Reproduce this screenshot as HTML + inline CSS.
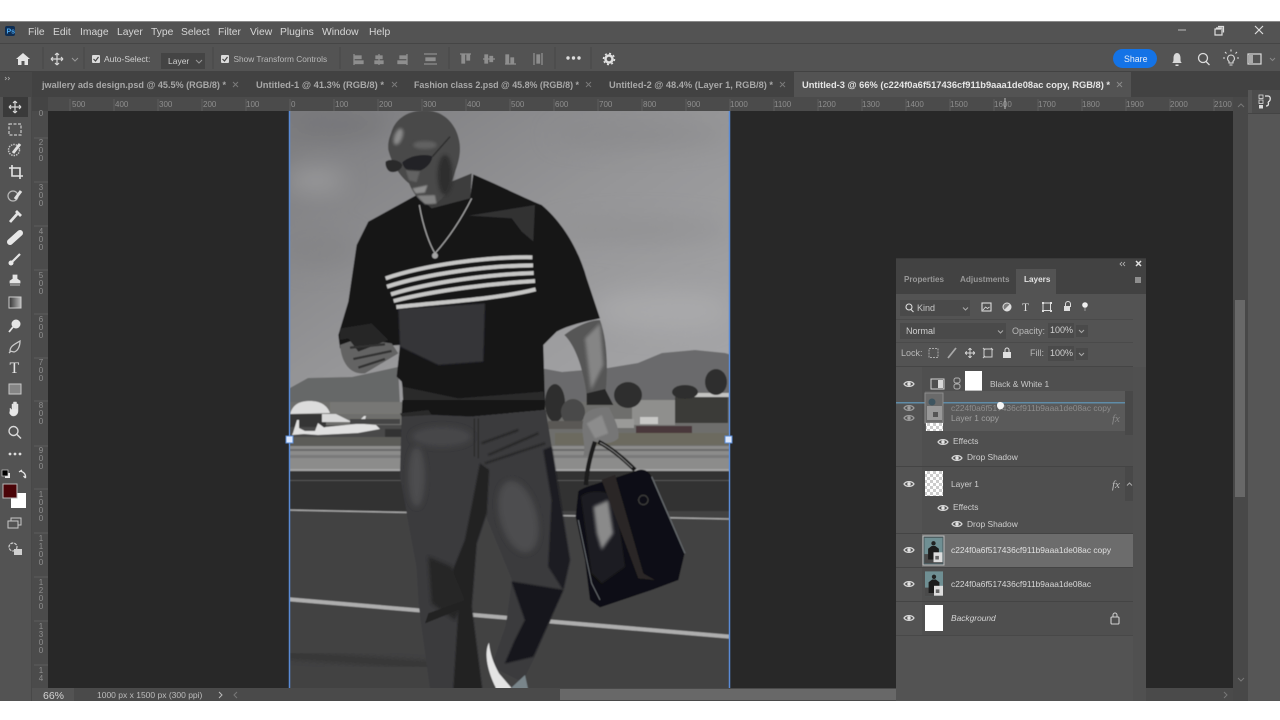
<!DOCTYPE html>
<html><head><meta charset="utf-8"><title>Photoshop</title>
<style>
html,body{margin:0;padding:0;width:1280px;height:720px;overflow:hidden;background:#fff}
body>svg{display:block;filter:blur(.35px)}
text{font-family:"Liberation Sans",sans-serif}
.m{font-size:10.300px;fill:#d6d6d6}
.o{font-size:8.500px;fill:#d0d0d0}
.t{font-size:9.200px;font-weight:700;fill:#a8a8a8}
.r{font-size:8px;fill:#8e8e8e}
.l{font-size:8.400px;fill:#cfcfcf}
</style></head><body>
<svg width="1280" height="720" viewBox="0 0 1280 720" xmlns="http://www.w3.org/2000/svg">
<defs>
<clipPath id="photo"><rect x="289" y="111" width="441" height="577"/></clipPath>
<linearGradient id="sky" x1="0" y1="0" x2="1" y2="1"><stop offset="0" stop-color="#7b7b7e"/><stop offset=".5" stop-color="#969698"/><stop offset="1" stop-color="#a8a8aa"/></linearGradient>
<linearGradient id="grad" x1="0" y1="0" x2="1" y2="0"><stop offset="0" stop-color="#333"/><stop offset="1" stop-color="#bbb"/></linearGradient>
<pattern id="chk" width="6" height="6" patternUnits="userSpaceOnUse"><rect width="6" height="6" fill="#fff"/><rect width="3" height="3" fill="#ccc"/><rect x="3" y="3" width="3" height="3" fill="#ccc"/></pattern>
<filter id="b0" x="-5%" y="-5%" width="110%" height="110%"><feGaussianBlur stdDeviation=".6"/></filter>
<filter id="b1" x="-20%" y="-20%" width="140%" height="140%"><feGaussianBlur stdDeviation="2"/></filter>
<filter id="b2" x="-30%" y="-30%" width="160%" height="160%"><feGaussianBlur stdDeviation="5"/></filter>
<filter id="b3" x="-40%" y="-40%" width="180%" height="180%"><feGaussianBlur stdDeviation="9"/></filter>
<filter id="b8" x="-40%" y="-40%" width="180%" height="180%"><feGaussianBlur stdDeviation="12"/></filter>
<g id="eye"><path d="M-5 0C-3-3.200 3-3.200 5 0 3 3.200-3 3.200-5 0Z" fill="none" stroke="#d8d8d8" stroke-width="1.200"/><circle r="1.700" fill="#e4e4e4"/></g>
<g id="move"><path d="M-6 0H6M0-6V6M-6 0l2-2M-6 0l2 2M6 0l-2-2M6 0l-2 2M0-6l-2 2M0-6l2 2M0 6l-2-2M0 6l2-2" stroke="#d8d8d8" stroke-width="1.200" fill="none"/></g>
<g id="man"><rect x="-5" y="-7" width="10" height="14" fill="#6f8f93"/><rect x="-5" y="2" width="10" height="5" fill="#4a4a4a"/><circle cy="-4" r="1.200" fill="#222"/><path d="M-3 5V-1L-1-2.500H1L3-1V5Z" fill="#1c1c1c"/><rect x="0" y="1" width="5" height="5.500" fill="#ddd"/><rect x="1" y="3" width="2" height="2" fill="#666"/></g>
</defs>

<rect width="1280" height="720" fill="#fff"/>
<rect y="21" width="1280" height="680" fill="#535353"/>
<rect y="21" width="1280" height="1" fill="#8a8a8a"/>
<rect y="43" width="1280" height="1" fill="#454545"/>
<rect y="71" width="1280" height="26" fill="#424242"/>

<!-- title bar -->
<rect x="5" y="26" width="10" height="10" rx="2" fill="#0f2d52"/>
<text x="6.500" y="33.500" style="font-size:7px;font-weight:700;fill:#4aa8f0">Ps</text>
<text class="m" x="28" y="35">File</text>
<text class="m" x="53" y="35">Edit</text>
<text class="m" x="80" y="35">Image</text>
<text class="m" x="117" y="35">Layer</text>
<text class="m" x="151" y="35">Type</text>
<text class="m" x="181" y="35">Select</text>
<text class="m" x="218" y="35">Filter</text>
<text class="m" x="250" y="35">View</text>
<text class="m" x="280" y="35">Plugins</text>
<text class="m" x="322" y="35">Window</text>
<text class="m" x="369" y="35">Help</text>
<path d="M1178 30h8" stroke="#aaa" stroke-width="1.200"/>
<path d="M1216 28h6v7h-7v-6h6M1218 26.500h5.500v6" stroke="#ddd" stroke-width="1.200" fill="none"/>
<path d="M1255 26l8 8M1263 26l-8 8" stroke="#ddd" stroke-width="1.200"/>

<!-- options bar -->
<path d="M16 59l7-6 7 6h-2v6h-3.500v-4h-3v4H18v-6z" fill="#e4e4e4"/>
<path d="M43 47v22M84 47v22M213 47v22M340 47v22M449 47v22M555 47v22M591 47v22" stroke="#474747"/>
<use href="#move" x="57" y="59"/>
<path d="M72 58l3 3 3-3" stroke="#999" fill="none"/>
<rect x="92" y="55" width="8" height="8" rx="1" fill="#dcdcdc"/><path d="M93.500 59l2 2 3-4" stroke="#444" stroke-width="1.200" fill="none"/>
<text class="o" x="104" y="62">Auto-Select:</text>
<rect x="161" y="53" width="44" height="16" fill="#444"/>
<text class="o" x="168" y="64">Layer</text><path d="M196 60l3 3 3-3" stroke="#999" fill="none"/>
<rect x="221" y="55" width="8" height="8" rx="1" fill="#dcdcdc"/><path d="M222.500 59l2 2 3-4" stroke="#444" stroke-width="1.200" fill="none"/>
<text class="o" x="233.500" y="62" style="font-size:8.300px;fill:#b8b8b8">Show Transform Controls</text>
<g stroke="#8e8e8e" stroke-width="1.300" fill="#8e8e8e">
<path d="M354 54v11" fill="none"/><rect x="355" y="56" width="6" height="2.500"/><rect x="355" y="61" width="8" height="2.500"/>
<path d="M379 54v11" fill="none"/><rect x="376" y="56" width="6" height="2.500"/><rect x="375" y="61" width="8" height="2.500"/>
<path d="M407 54v11" fill="none"/><rect x="400" y="56" width="6" height="2.500"/><rect x="398" y="61" width="8" height="2.500"/>
<path d="M424 54h13M424 64h13" fill="none"/><rect x="426" y="58" width="9" height="2.500"/>
<path d="M460 54h11" fill="none"/><rect x="462" y="55" width="2.500" height="8"/><rect x="467" y="55" width="2.500" height="5"/>
<path d="M483 59h12" fill="none"/><rect x="485" y="55" width="2.500" height="8"/><rect x="490" y="56.500" width="2.500" height="5"/>
<path d="M505 64h11" fill="none"/><rect x="506" y="55" width="2.500" height="8"/><rect x="511" y="58" width="2.500" height="5"/>
<path d="M534 53v12M542 53v12" fill="none"/><rect x="537" y="55" width="2.500" height="8"/>
</g>
<circle cx="568" cy="58" r="1.700" fill="#ddd"/><circle cx="573.500" cy="58" r="1.700" fill="#ddd"/><circle cx="579" cy="58" r="1.700" fill="#ddd"/>
<circle cx="609" cy="59" r="3.500" fill="none" stroke="#e0e0e0" stroke-width="2.500"/><circle cx="609" cy="59" r="5.500" fill="none" stroke="#e0e0e0" stroke-width="1.500" stroke-dasharray="2 2.300"/>
<rect x="1113" y="49" width="44" height="19" rx="9.500" fill="#1473e6"/>
<text x="1124" y="62" style="font-size:8.800px;fill:#e8eef8">Share</text>
<path d="M1172 63c1.500-1 1.500-2 1.500-5 0-3 1.500-5 3.500-5s3.500 2 3.500 5c0 3 0 4 1.500 5ZM1175.500 64.500h3v1.500h-3z" fill="#d8d8d8"/>
<circle cx="1203" cy="58" r="4.500" fill="none" stroke="#dcdcdc" stroke-width="1.300"/><path d="M1206 61.500l3.500 3.500" stroke="#dcdcdc" stroke-width="1.300"/>
<path d="M1231 55a3.500 3.500 0 0 0-2 6.300V63h4v-1.700a3.500 3.500 0 0 0-2-6.300ZM1229.500 65h3M1231 49.500v2M1225 52l1.500 1.500M1237 52l-1.500 1.500M1223 58h2M1237 58h2" stroke="#dcdcdc" fill="none" stroke-width="1.100"/>
<rect x="1248" y="54" width="13" height="10" fill="none" stroke="#dcdcdc" stroke-width="1.200"/><rect x="1249" y="55" width="4" height="8" fill="#aaa"/>
<path d="M1270 58l2.500 2.500 2.500-2.500" stroke="#888" fill="none"/>

<!-- tabs -->
<rect y="72" width="32" height="25" fill="#474747"/>
<path d="M5 77l1.500 1.500-1.500 1.500M8 77l1.500 1.500-1.500 1.500" stroke="#aaa" fill="none" stroke-width=".8"/>
<text class="t" x="42" y="88" textLength="184" lengthAdjust="spacingAndGlyphs">jwallery ads design.psd @ 45.5% (RGB/8) *</text>
<path d="M233 82l5 5M238 82l-5 5" stroke="#7a7a7a"/>
<text class="t" x="256" y="88" textLength="128" lengthAdjust="spacingAndGlyphs">Untitled-1 @ 41.3% (RGB/8) *</text>
<path d="M392 82l5 5M397 82l-5 5" stroke="#7a7a7a"/>
<text class="t" x="414" y="88" textLength="165" lengthAdjust="spacingAndGlyphs">Fashion class 2.psd @ 45.8% (RGB/8) *</text>
<path d="M586 82l5 5M591 82l-5 5" stroke="#7a7a7a"/>
<text class="t" x="609" y="88" textLength="164" lengthAdjust="spacingAndGlyphs">Untitled-2 @ 48.4% (Layer 1, RGB/8) *</text>
<path d="M780 82l5 5M785 82l-5 5" stroke="#7a7a7a"/>
<rect x="794" y="72" width="337" height="25" fill="#535353"/>
<text class="t" x="802" y="88" textLength="308" lengthAdjust="spacingAndGlyphs" style="fill:#e6e6e6">Untitled-3 @ 66% (c224f0a6f517436cf911b9aaa1de08ac copy, RGB/8) *</text>
<path d="M1117 82l5 5M1122 82l-5 5" stroke="#8a8a8a"/>
<path d="M1277 77l-1.500 1.500 1.500 1.500M1274 77l-1.500 1.500 1.500 1.500" stroke="#aaa" fill="none" stroke-width=".8"/>

<!-- ruler -->
<rect x="32" y="97" width="1201" height="14" fill="#4b4b4b"/>
<rect x="32" y="97" width="16" height="591" fill="#4b4b4b"/>
<rect x="32" y="97" width="16" height="14" fill="#444"/>
<g stroke="#5e5e5e">
<path d="M70 99v12M114 99v12M158 99v12M202 99v12M246 99v12M290 99v12M334 99v12M378 99v12M422 99v12M466 99v12M510 99v12M554 99v12M598 99v12M642 99v12M686 99v12M730 99v12M774 99v12M818 99v12M862 99v12M906 99v12M950 99v12M994 99v12M1038 99v12M1082 99v12M1126 99v12M1170 99v12M1214 99v12"/>
<path d="M34 138h14M34 182h14M34 226h14M34 270h14M34 314h14M34 358h14M34 401h14M34 446h14M34 489h14M34 533h14M34 577h14M34 621h14M34 665h14"/>
</g>
<text class="r" x="72" y="107">500</text><text class="r" x="115" y="107">400</text><text class="r" x="159" y="107">300</text><text class="r" x="203" y="107">200</text><text class="r" x="246" y="107">100</text><text class="r" x="291" y="107">0</text><text class="r" x="335" y="107">100</text><text class="r" x="379" y="107">200</text><text class="r" x="423" y="107">300</text><text class="r" x="467" y="107">400</text><text class="r" x="511" y="107">500</text><text class="r" x="555" y="107">600</text><text class="r" x="599" y="107">700</text><text class="r" x="643" y="107">800</text><text class="r" x="687" y="107">900</text><text class="r" x="730" y="107">1000</text><text class="r" x="774" y="107">1100</text><text class="r" x="818" y="107">1200</text><text class="r" x="862" y="107">1300</text><text class="r" x="906" y="107">1400</text><text class="r" x="950" y="107">1500</text><text class="r" x="994" y="107">1600</text><text class="r" x="1038" y="107">1700</text><text class="r" x="1082" y="107">1800</text><text class="r" x="1126" y="107">1900</text><text class="r" x="1170" y="107">2000</text><text class="r" x="1214" y="107">2100</text>
<path d="M1005 98v11" stroke="#bbb"/>
<g text-anchor="middle">
<text class="r" x="41" y="116">0</text>
<text class="r" x="41" y="145">2</text><text class="r" x="41" y="153">0</text><text class="r" x="41" y="161">0</text>
<text class="r" x="41" y="190">3</text><text class="r" x="41" y="198">0</text><text class="r" x="41" y="206">0</text>
<text class="r" x="41" y="234">4</text><text class="r" x="41" y="242">0</text><text class="r" x="41" y="250">0</text>
<text class="r" x="41" y="278">5</text><text class="r" x="41" y="286">0</text><text class="r" x="41" y="294">0</text>
<text class="r" x="41" y="322">6</text><text class="r" x="41" y="330">0</text><text class="r" x="41" y="338">0</text>
<text class="r" x="41" y="365">7</text><text class="r" x="41" y="373">0</text><text class="r" x="41" y="381">0</text>
<text class="r" x="41" y="408">8</text><text class="r" x="41" y="416">0</text><text class="r" x="41" y="424">0</text>
<text class="r" x="41" y="453">9</text><text class="r" x="41" y="461">0</text><text class="r" x="41" y="469">0</text>
<text class="r" x="41" y="497">1</text><text class="r" x="41" y="505">0</text><text class="r" x="41" y="513">0</text><text class="r" x="41" y="521">0</text>
<text class="r" x="41" y="541">1</text><text class="r" x="41" y="549">1</text><text class="r" x="41" y="557">0</text><text class="r" x="41" y="565">0</text>
<text class="r" x="41" y="585">1</text><text class="r" x="41" y="593">2</text><text class="r" x="41" y="601">0</text><text class="r" x="41" y="609">0</text>
<text class="r" x="41" y="629">1</text><text class="r" x="41" y="637">3</text><text class="r" x="41" y="645">0</text><text class="r" x="41" y="653">0</text>
<text class="r" x="41" y="673">1</text><text class="r" x="41" y="681">4</text>
</g>

<!-- canvas -->
<rect x="48" y="111" width="1185" height="577" fill="#282828"/>

<!-- PHOTO -->
<g clip-path="url(#photo)"><g filter="url(#b0)">
<rect x="285" y="105" width="450" height="300" fill="url(#sky)"/>
<g filter="url(#b8)" opacity=".5">
<ellipse cx="315" cy="180" rx="30" ry="12" fill="#b0b0b0"/>
<ellipse cx="340" cy="125" rx="50" ry="12" fill="#6b6b6d"/>
<ellipse cx="640" cy="135" rx="90" ry="12" fill="#858587"/>
<ellipse cx="640" cy="230" rx="90" ry="12" fill="#8a8a8c"/>
<ellipse cx="320" cy="250" rx="40" ry="18" fill="#808082"/>
<ellipse cx="660" cy="310" rx="70" ry="20" fill="#b2b2b4"/>
</g>
<path d="M285 392L290 388 308 378 352 377 398 367 400 405H285Z" fill="#666768"/>
<path d="M540 405V368L562 372 608 368 638 363 662 353 695 350 725 353 735 356V405Z" fill="#6a6b6c"/>
<path d="M285 402H735V446H285Z" fill="#6e6e6c"/>
<rect x="330" y="402" width="75" height="12" fill="#777775"/>
<rect x="285" y="425" width="120" height="12" fill="#4a4a48"/>
<rect x="285" y="437" width="120" height="9" fill="#5c5c58"/>
<!-- hangar & planes -->
<path d="M290 414c3-10 10-13 20-13s17 4 20 12Z" fill="#dcdcdc"/>
<rect x="290" y="414" width="36" height="13" fill="#353535"/>
<path d="M322 414h14l16 8H322Z" fill="#d8d8d8"/>
<path d="M293 433l4-13 2 0 0 8 6 3 10 0 3-8 8 6-8 0 8-2 30-3 8-8 2 0-2 8 12 1 4 4-22 4-40 2-14-1-12 1Z" fill="#e0e0e0"/>
<rect x="350" y="419" width="50" height="5" fill="#454545"/>
<rect x="385" y="429" width="20" height="8" fill="#333"/>
<!-- right buildings -->
<rect x="632" y="400" width="43" height="25" fill="#8f8f8d"/>
<rect x="675" y="397" width="53" height="26" fill="#3a3a38"/>
<rect x="690" y="393" width="40" height="4" fill="#c4c4c2"/>
<g fill="#2f2f2f">
<ellipse cx="628" cy="395" rx="14" ry="13"/><ellipse cx="685" cy="392" rx="13" ry="7"/><ellipse cx="716" cy="382" rx="11" ry="13"/>
<ellipse cx="555" cy="403" rx="10" ry="19"/>
<ellipse cx="573" cy="412" rx="12" ry="13" fill="#4a4a48"/>
</g>
<rect x="612" y="419" width="22" height="9" fill="#9a9a98"/>
<rect x="640" y="417" width="18" height="7" fill="#c8c8c6"/>
<rect x="548" y="421" width="45" height="8" fill="#5a5854"/>
<rect x="636" y="426" width="56" height="7" fill="#48383a"/>
<rect x="555" y="433" width="175" height="12" fill="#6c6a5e"/>
<!-- runway -->
<rect x="285" y="446" width="450" height="25" fill="#8c8c8b"/>
<rect x="285" y="449" width="450" height="2" fill="#6a6a6a"/>
<rect x="285" y="455" width="450" height="3" fill="#7a7a7a"/>
<rect x="285" y="469" width="450" height="2" fill="#a4a4a4"/>
<rect x="285" y="471" width="450" height="40" fill="#303030"/>
<rect x="285" y="480" width="450" height="1" fill="#555"/>
<path d="M285 511H735V692H285Z" fill="#424243"/>
<path d="M285 510L730 519" stroke="#a6a6a6" stroke-width="1.500"/>
<path d="M285 599L733 637" stroke="#aeaeae" stroke-width="4"/>
<path d="M285 655L430 665" stroke="#383838" stroke-width="10" filter="url(#b1)"/>

<!-- body upper (x=285+zx/3, y=105+zy/3) -->
<g transform="translate(285 105) scale(.33333)">
<path d="M400 270L560 205 556 285 510 310 440 320Z" fill="#3c3c3c"/>
<path d="M565 208C640 240 720 280 770 300 830 350 880 430 905 520L945 640C900 650 850 660 815 680L775 720 780 900H360L350 830 335 815 345 720 165 730 160 690 190 590 215 420 250 350 395 270 440 310 555 280Z" fill="#161618"/>
<path d="M550 332L750 300 745 410 710 380 680 340Z" fill="#303031" filter="url(#b0)"/>
<path d="M340 612L600 595 595 770 460 780 345 725Z" fill="#363637" filter="url(#b1)"/>
<path d="M352 845L520 880 775 860 780 900H355Z" fill="#2c2c2c"/>
<g fill="none" stroke="#c6c6c5" stroke-width="12">
<path d="M302 520C420 480 600 455 742 457"/>
<path d="M306 545C430 505 610 482 744 481"/>
<path d="M318 568C440 530 620 508 746 504"/>
<path d="M326 588C450 555 630 535 750 528"/>
<path d="M334 606C460 592 640 582 752 553"/>
</g>
<!-- head -->
<path d="M318 85C330 40 370 16 420 16 475 16 512 55 522 105 528 130 525 160 512 195 500 240 480 285 445 298 415 302 390 278 372 235 345 215 320 175 310 135 308 115 312 100 318 85Z" fill="#484848"/>
<ellipse cx="340" cy="95" rx="12" ry="26" transform="rotate(20 340 95)" fill="#8c8c8c" filter="url(#b2)"/>
<ellipse cx="420" cy="120" rx="36" ry="12" fill="#626262" filter="url(#b2)"/>
<ellipse cx="480" cy="210" rx="22" ry="60" fill="#2e2e2e" filter="url(#b2)"/>
<path d="M302 170C315 160 345 165 352 180 350 195 330 205 315 200 305 195 300 180 302 170Z" fill="#2a2a2c"/>
<path d="M352 172C375 150 425 145 442 155 440 175 420 195 395 200 370 203 355 190 352 172Z" fill="#242426"/>
<path d="M442 155L495 95" stroke="#2a2a2a" stroke-width="4"/>
<path d="M362 195L405 198 395 232 372 226Z" fill="#626262" filter="url(#b1)"/>
<path d="M382 250L428 240 420 263 392 266Z" fill="#8e8e8e" filter="url(#b1)"/>
<path d="M395 272L450 270 455 296 420 298Z" fill="#828282" filter="url(#b1)"/>
<!-- chain -->
<path d="M403 300C415 370 435 420 450 445 490 400 530 340 560 280" fill="none" stroke="#a9a9a9" stroke-width="3.500"/>
<circle cx="450" cy="452" r="9" fill="#a5a5a5"/>
<!-- phone hand -->
<path d="M165 720C170 780 200 810 240 805L340 745 320 715 220 700Z" fill="#646464"/>
<path d="M165 670L260 655 310 705 220 740 190 700 165 705Z" fill="#262626"/>
<path d="M195 728L300 718M205 762L320 738M220 788L300 762" stroke="#303030" stroke-width="7"/>
<!-- forearm -->
<path d="M838 690C870 665 915 645 945 645 965 700 970 780 962 860L905 870C895 790 870 720 838 690Z" fill="#565656" filter="url(#b0)"/>
<path d="M900 700L945 655 955 780 918 855Z" fill="#858585" filter="url(#b2)"/>
<path d="M905 865L960 852 985 900H905Z" fill="#262626"/>
</g>

<!-- lower (y=400+zy/3) -->
<g transform="translate(285 400) scale(.33333)">
<path d="M352 0L780 0 780 30 560 50 350 45Z" fill="#131315"/>
<path d="M350 40L560 50 782 30 800 140 855 480 835 570 750 770 712 845 620 800 662 680 682 540 600 340 575 420 560 620 592 870H436L402 620 395 500 345 230Z" fill="#3a3a3c"/>
<path d="M345 40L430 30 440 45 350 50Z" fill="#2b2b2b"/>
<path d="M585 190L612 210 605 340 575 430 560 620 592 870H505L520 640 500 520 540 420 560 320Z" fill="#202022" filter="url(#b1)"/>
<path d="M430 470L500 500 540 600 510 660 440 610Z" fill="#252527" filter="url(#b2)"/>
<path d="M775 150L800 140 855 480 835 570 790 500 800 300Z" fill="#1f1f21" filter="url(#b1)"/>
<path d="M680 545L835 570 745 770 660 790 690 720 720 660Z" fill="#17171b" filter="url(#b1)"/>
<ellipse cx="395" cy="230" rx="24" ry="90" fill="#4e4e50" filter="url(#b3)"/>
<ellipse cx="700" cy="350" rx="55" ry="110" transform="rotate(-15 700 350)" fill="#4e4e50" filter="url(#b3)"/>
<ellipse cx="470" cy="110" rx="90" ry="30" fill="#464648" filter="url(#b3)"/>
<path d="M430 640L540 600 545 620 420 670Z" fill="#242424" filter="url(#b0)"/>
<path d="M568 55V170M580 55V175" stroke="#2b2b2b" stroke-width="4"/>
<path d="M600 190L780 130M610 165L760 100M590 130L700 90" stroke="#272727" stroke-width="6" filter="url(#b1)"/>
<!-- shoe -->
<path d="M612 728C595 760 610 820 632 862V870H678V862L642 820C625 790 615 760 612 728Z" fill="#e4e4e4"/>
<path d="M680 870V862L720 825 730 870Z" fill="#79858a"/>
<!-- hand -->
<path d="M895 60C895 35 925 20 972 22 985 50 1005 85 1000 115 980 135 950 130 930 125L918 165 895 170C905 130 885 100 895 60Z" fill="#767676"/>
<path d="M905 70L950 45 970 100 930 115Z" fill="#8c8c8c" filter="url(#b1)"/>
<!-- bag -->
<path d="M940 125C980 145 1020 180 1050 210" fill="none" stroke="#191919" stroke-width="13"/>
<path d="M945 128C985 148 1020 183 1042 203" fill="none" stroke="#808080" stroke-width="3"/>
<path d="M930 125C915 170 905 210 903 255" fill="none" stroke="#1d1d1f" stroke-width="13"/>
<path d="M880 275C890 260 950 250 1060 210 1085 205 1095 220 1105 240L1200 455 1180 540 1100 570 945 622 915 600 900 480 872 350Z" fill="#101012"/>
<path d="M888 290C910 270 960 270 990 290L1020 500 950 550 920 520Z" fill="#1f1f21" filter="url(#b1)"/>
<path d="M925 320L970 300 985 400 950 450 935 400Z" fill="#8a8a8a" filter="url(#b2)"/>
<path d="M950 240L990 225 1075 520 1110 540 1060 535Z" fill="#2a2525"/>
<path d="M1100 230L1200 460" stroke="#666a6e" stroke-width="4" fill="none"/>
<path d="M880 360L920 550 945 600" stroke="#70757a" stroke-width="2.500" fill="none"/>
<circle cx="1075" cy="300" r="14" fill="none" stroke="#3a3a3a" stroke-width="4"/>
</g>
</g></g>
<!-- transform frame -->
<path d="M289.500 111V688M729.500 111V688" stroke="#5a8bd6" stroke-width="1.500"/>
<rect x="286" y="436" width="7" height="7" fill="#dbe8ff" stroke="#5a8bd6"/>
<rect x="725" y="436" width="7" height="7" fill="#dbe8ff" stroke="#5a8bd6"/>

<!-- toolbar -->
<rect y="97" width="32" height="604" fill="#535353"/>
<rect x="31" y="97" width="1" height="604" fill="#484848"/>
<rect x="3" y="97" width="25" height="20" fill="#3a3a3a"/>
<use href="#move" x="15" y="107"/>
<rect x="9" y="124" width="12" height="11" fill="none" stroke="#c8c8c8" stroke-width="1.200" stroke-dasharray="3 1.500"/>
<circle cx="14" cy="150" r="5.500" fill="none" stroke="#c4c4c4" stroke-width="1.500" stroke-dasharray="1.500 1"/><path d="M13 153L20 144" stroke="#e0e0e0" stroke-width="3"/>
<path d="M12 165V176H23M9 168H20V179" stroke="#e4e4e4" stroke-width="1.600" fill="none"/>
<circle cx="13" cy="196" r="5" fill="none" stroke="#b8b8b8" stroke-width="1.200"/><path d="M15 199L21 191" stroke="#e0e0e0" stroke-width="3"/>
<path d="M10 222L18 213M16 211L21 216" stroke="#e4e4e4" stroke-width="2.800"/>
<path d="M10 242L20 233" stroke="#e8e8e8" stroke-width="6" stroke-linecap="round"/>
<path d="M10 264L20 254" stroke="#e4e4e4" stroke-width="2.200"/><circle cx="11" cy="263" r="2.500" fill="#e8e8e8"/>
<path d="M13 275h4v4l3 2v2h-10v-2l3-2zM10 285h10" fill="#e4e4e4" stroke="#e4e4e4" stroke-width=".8"/>
<rect x="9" y="297" width="12" height="11" fill="url(#grad)" stroke="#ccc"/>
<circle cx="16" cy="324" r="4.500" fill="#e4e4e4"/><path d="M13 327L9 332" stroke="#e4e4e4" stroke-width="1.800"/>
<path d="M10 351C10 346 15 344 20 341 20 346 18 351 14 352ZM9 353l2-2" stroke="#c8c8c8" fill="none" stroke-width="1.300"/>
<text x="9.500" y="373" style="font-family:'Liberation Serif',serif;font-size:16px;fill:#e4e4e4">T</text>
<rect x="9" y="384" width="12" height="10" fill="#858585" stroke="#c8c8c8"/>
<path d="M10 411v-3l2 2v-6h1.500v5V402h1.500v7-7h1.500v7-5h1.500v7c0 3-2 5-4.500 5-2 0-3-1-4-3Z" fill="#e8e8e8" stroke="#ddd" stroke-width=".5"/>
<circle cx="13.500" cy="431" r="4.500" fill="none" stroke="#d8d8d8" stroke-width="1.400"/><path d="M17 434.500L21 438.500" stroke="#d8d8d8" stroke-width="1.500"/>
<circle cx="10" cy="454" r="1.400" fill="#ddd"/><circle cx="15" cy="454" r="1.400" fill="#ddd"/><circle cx="20" cy="454" r="1.400" fill="#ddd"/>
<rect x="5" y="473" width="5" height="5" fill="#e8e8e8"/><rect x="2" y="470" width="6" height="6" fill="#000" stroke="#ccc" stroke-width=".7"/>
<path d="M20 471C24 472 26 474 25.500 478M19 472l3-2M25.500 478l-2-2" stroke="#e4e4e4" stroke-width="1.300" fill="none"/>
<rect x="11" y="493" width="15" height="15" fill="#fff"/>
<rect x="3" y="484" width="14" height="14" fill="#4a0408" stroke="#b8b8b8"/>
<rect x="11" y="518" width="10" height="7" fill="none" stroke="#c8c8c8"/><rect x="8" y="521" width="10" height="7" fill="#535353" stroke="#c8c8c8"/>
<circle cx="13" cy="547" r="4" fill="none" stroke="#d0d0d0" stroke-width="1.200" stroke-dasharray="3 1"/><rect x="14" y="549" width="8" height="6" fill="#d0d0d0"/>

<!-- right scrollbar + panel -->
<rect x="1233" y="97" width="15" height="604" fill="#484848"/>
<rect x="1235" y="300" width="10" height="197" fill="#686868"/>
<path d="M1238 107l3-3 3 3" stroke="#777" fill="none"/>
<path d="M1238 678l3 3 3-3" stroke="#777" fill="none"/>
<rect x="1248" y="72" width="32" height="629" fill="#565656"/>
<rect x="1248" y="72" width="32" height="18" fill="#424242"/>
<rect x="1252" y="90" width="28" height="23" fill="#4c4c4c"/>
<rect x="1248" y="113" width="32" height="1" fill="#444"/>
<rect x="1259" y="95" width="4" height="3.500" fill="none" stroke="#ddd" stroke-width=".8"/><rect x="1259" y="100" width="4" height="3.500" fill="none" stroke="#ddd" stroke-width=".8"/><rect x="1259" y="105" width="4" height="3.500" fill="#ddd"/>
<path d="M1265 96h3c3 0 3 5 0 6M1266 106c2.500 0 3-2 2-4" stroke="#e4e4e4" fill="none" stroke-width="1.300"/>

<!-- bottom scrollbar / status -->
<rect x="32" y="688" width="1201" height="13" fill="#4a4a4a"/>
<rect x="32" y="688" width="42" height="13" fill="#535353"/>
<rect x="560" y="689" width="340" height="11" fill="#686868"/>
<text x="43" y="699" style="font-size:10.500px;fill:#d4d4d4">66%</text>
<text x="97" y="698" style="font-size:8.500px;fill:#bdbdbd">1000 px x 1500 px (300 ppi)</text>
<path d="M219 692l3 3-3 3" stroke="#bbb" fill="none"/>
<path d="M237 692l-3 3 3 3" stroke="#777" fill="none"/>
<path d="M1224 692l3 3-3 3" stroke="#777" fill="none"/>
<rect y="701" width="1280" height="19" fill="#fff"/>

<!-- layers panel -->
<rect x="896" y="258" width="250" height="443" fill="#535353"/>
<rect x="896" y="258" width="250" height="36" fill="#424242"/>
<rect x="896" y="258" width="250" height="1" fill="#3a3a3a"/>
<path d="M1125 262l-2 2 2 2M1122 262l-2 2 2 2" stroke="#bbb" fill="none" stroke-width=".8"/>
<path d="M1136 261l5 5M1141 261l-5 5" stroke="#e0e0e0" stroke-width="1.500"/>
<rect x="1016" y="269" width="40" height="25" fill="#535353"/>
<text x="904" y="282" style="font-size:8.100px;font-weight:700;fill:#979797">Properties</text>
<text x="960" y="282" style="font-size:8.200px;font-weight:700;fill:#979797">Adjustments</text>
<text x="1024" y="282" style="font-size:8.200px;font-weight:700;fill:#e2e2e2">Layers</text>
<rect x="1135" y="277" width="6" height="6" fill="#8e8e8e"/>
<!-- filter -->
<rect x="900" y="300" width="70" height="16" fill="#4a4a4a"/>
<circle cx="909" cy="307" r="3" fill="none" stroke="#ddd" stroke-width="1.100"/><path d="M911 309.500l2.500 2.500" stroke="#ddd" stroke-width="1.100"/>
<text x="917" y="311" style="font-size:9px;fill:#c8c8c8">Kind</text>
<path d="M963 307.500l2.500 2.500 2.500-2.500" stroke="#aaa" fill="none"/>
<rect x="982" y="303" width="9" height="8" fill="none" stroke="#ddd" stroke-width="1.100"/><path d="M983 310l2.500-3 2 1.500 2-1.500" stroke="#ddd" fill="none" stroke-width=".8"/>
<circle cx="1007" cy="307" r="4" fill="#7c7c7c" stroke="#ddd"/><path d="M1004 310l6-6a4 4 0 0 1-6 6" fill="#ddd"/>
<text x="1022" y="311" style="font-family:'Liberation Serif',serif;font-size:11.500px;fill:#ddd">T</text>
<rect x="1043" y="303" width="7.500" height="7.500" fill="none" stroke="#ddd"/><rect x="1042" y="302" width="2" height="2" fill="#ddd"/><rect x="1050" y="302" width="2" height="2" fill="#ddd"/><rect x="1042" y="310" width="2" height="2" fill="#ddd"/><rect x="1050" y="310" width="2" height="2" fill="#ddd"/>
<rect x="1064" y="306" width="6" height="5" fill="#ddd"/><path d="M1065.500 306v-2a2.500 2.500 0 0 1 5 0v3" stroke="#ddd" fill="none"/>
<circle cx="1085" cy="305" r="2.800" fill="#f0f0f0"/><rect x="1084" y="308" width="2" height="3" fill="#777"/>
<rect x="896" y="319" width="237" height="1" fill="#4a4a4a"/>
<!-- blend -->
<rect x="900" y="323" width="106" height="16" fill="#4a4a4a"/>
<text x="906" y="334" style="font-size:9px;fill:#cfcfcf">Normal</text>
<path d="M998 330.500l2.500 2.500 2.500-2.500" stroke="#aaa" fill="none"/>
<text x="1012" y="334" style="font-size:9px;fill:#b8b8b8">Opacity:</text>
<rect x="1048" y="323" width="26" height="15" fill="#4a4a4a"/>
<text x="1050" y="333" style="font-size:9px;fill:#d0d0d0">100%</text>
<rect x="1076" y="325" width="12" height="12" fill="#4a4a4a"/><path d="M1079 330l2.500 2.500 2.500-2.500" stroke="#aaa" fill="none"/>
<rect x="896" y="342" width="237" height="1" fill="#4a4a4a"/>
<!-- lock -->
<text x="901" y="356" style="font-size:9px;fill:#b8b8b8">Lock:</text>
<rect x="929" y="348.500" width="9" height="9" fill="none" stroke="#a8a8a8" stroke-dasharray="2 1"/>
<path d="M948 358l8-10" stroke="#a8a8a8" stroke-width="1.800"/>
<g transform="translate(970 353) scale(.8)"><use href="#move"/></g>
<rect x="984" y="349" width="8" height="8" fill="none" stroke="#d0d0d0"/><path d="M983 348l2 2M991 348l2 2M983 358l2-2" stroke="#d0d0d0"/>
<rect x="1003" y="352" width="8" height="6" fill="#e0e0e0"/><path d="M1005 352v-2a2 2 0 0 1 4 0v2" stroke="#e0e0e0" fill="none"/>
<text x="1030" y="356" style="font-size:9px;fill:#b8b8b8">Fill:</text>
<rect x="1048" y="346" width="26" height="15" fill="#4a4a4a"/>
<text x="1050" y="356" style="font-size:9px;fill:#d0d0d0">100%</text>
<rect x="1076" y="348" width="12" height="12" fill="#4a4a4a"/><path d="M1079 353l2.500 2.500 2.500-2.500" stroke="#aaa" fill="none"/>
<rect x="896" y="366" width="237" height="1" fill="#454545"/>
<!-- list -->
<rect x="1133" y="367" width="13" height="334" fill="#505050"/>
<rect x="922" y="367" width="211" height="268" fill="#4f4f4f"/>
<!-- BW -->
<use href="#eye" x="909" y="384"/>
<rect x="931" y="379" width="13" height="10" fill="#4f4f4f" stroke="#d0d0d0"/><rect x="938" y="380" width="5" height="8" fill="#d8d8d8"/>
<rect x="954" y="378" width="6" height="5" rx="2" fill="none" stroke="#b0b0b0"/><rect x="954" y="384" width="6" height="5" rx="2" fill="none" stroke="#b0b0b0"/>
<rect x="965" y="371" width="17" height="24" fill="#fff"/><rect x="965" y="390" width="17" height="5" fill="#bdbdbd"/>
<text class="l" x="990" y="387" style="fill:#c8c8c8">Black &amp; White 1</text>
<!-- dragged -->
<rect x="925" y="391" width="208" height="40" fill="#5a5a5a"/>
<rect x="922" y="431" width="211" height="35" fill="#4f4f4f"/>
<rect x="896" y="402" width="237" height="1.500" fill="#5f8ca8"/>
<use href="#eye" x="909" y="408" opacity=".55"/>
<use href="#eye" x="909" y="418" opacity=".55"/>
<rect x="925" y="393" width="18" height="30" fill="#6a6a6a" stroke="#8c8c8c"/>
<circle cx="932" cy="402" r="3.500" fill="#3e5560"/><rect x="927" y="406" width="15" height="14" fill="#999"/><rect x="933" y="412" width="5" height="5" fill="#555"/>
<rect x="926" y="423" width="17" height="8" fill="url(#chk)"/>
<text class="l" x="951" y="411" style="fill:#8d8d8d">c224f0a6f517436cf911b9aaa1de08ac copy</text>
<text class="l" x="951" y="421" style="fill:#a0a0a0">Layer 1 copy</text>
<text x="1112" y="422" style="font-family:'Liberation Serif',serif;font-style:italic;font-size:11px;fill:#8a8a8a">fx</text>
<path d="M1126 419h5" stroke="#777"/>
<path d="M1000 402c-2 0-3 1.500-3 3.500s1.500 4 3 4 4-1.500 4-4-2-3.500-4-3.500Z" fill="#f5f5f5"/>
<use href="#eye" x="943" y="442"/>
<text class="l" x="953" y="444">Effects</text>
<use href="#eye" x="957" y="458"/>
<text class="l" x="967" y="460">Drop Shadow</text>
<rect x="896" y="466" width="237" height="1" fill="#444"/>
<rect x="1125" y="467" width="8" height="34" fill="#484848"/>
<rect x="1125" y="391" width="8" height="44" fill="#484848"/>
<!-- layer 1 -->
<use href="#eye" x="909" y="484"/>
<rect x="925" y="471" width="18" height="25" fill="url(#chk)"/>
<text class="l" x="951" y="487">Layer 1</text>
<text x="1112" y="488" style="font-family:'Liberation Serif',serif;font-style:italic;font-size:11px;fill:#bdbdbd">fx</text>
<path d="M1127 485.500l2.500-2.500 2.500 2.500" stroke="#aaa" fill="none"/>
<use href="#eye" x="943" y="508"/>
<text class="l" x="953" y="510">Effects</text>
<use href="#eye" x="957" y="524"/>
<text class="l" x="967" y="527">Drop Shadow</text>
<rect x="896" y="533" width="237" height="1" fill="#444"/>
<!-- selected -->
<rect x="922" y="534" width="211" height="33" fill="#6c6c6c"/>
<use href="#eye" x="909" y="550"/>
<rect x="923" y="536" width="21" height="29" fill="#4a5a5e" stroke="#bdbdbd"/>
<g transform="translate(933.500 550.500) scale(1.800)"><use href="#man"/></g>
<text class="l" x="951" y="553" style="fill:#e0e0e0">c224f0a6f517436cf911b9aaa1de08ac copy</text>
<rect x="896" y="567" width="237" height="1" fill="#444"/>
<!-- base -->
<use href="#eye" x="909" y="584"/>
<g transform="translate(934 584) scale(1.800)"><use href="#man"/></g>
<text class="l" x="951" y="587" style="fill:#d8d8d8">c224f0a6f517436cf911b9aaa1de08ac</text>
<rect x="896" y="601" width="237" height="1" fill="#444"/>
<!-- background -->
<use href="#eye" x="909" y="618"/>
<rect x="925" y="605" width="18" height="26" fill="#fff"/>
<text class="l" x="951" y="621" style="font-style:italic;fill:#d4d4d4">Background</text>
<rect x="1111" y="617" width="8" height="7" rx="1" fill="none" stroke="#d0d0d0" stroke-width="1.100"/><path d="M1113 617v-2a2 2 0 0 1 4 0v2" stroke="#d0d0d0" fill="none"/>
<rect x="896" y="635" width="237" height="1" fill="#484848"/>
</svg>
</body></html>
